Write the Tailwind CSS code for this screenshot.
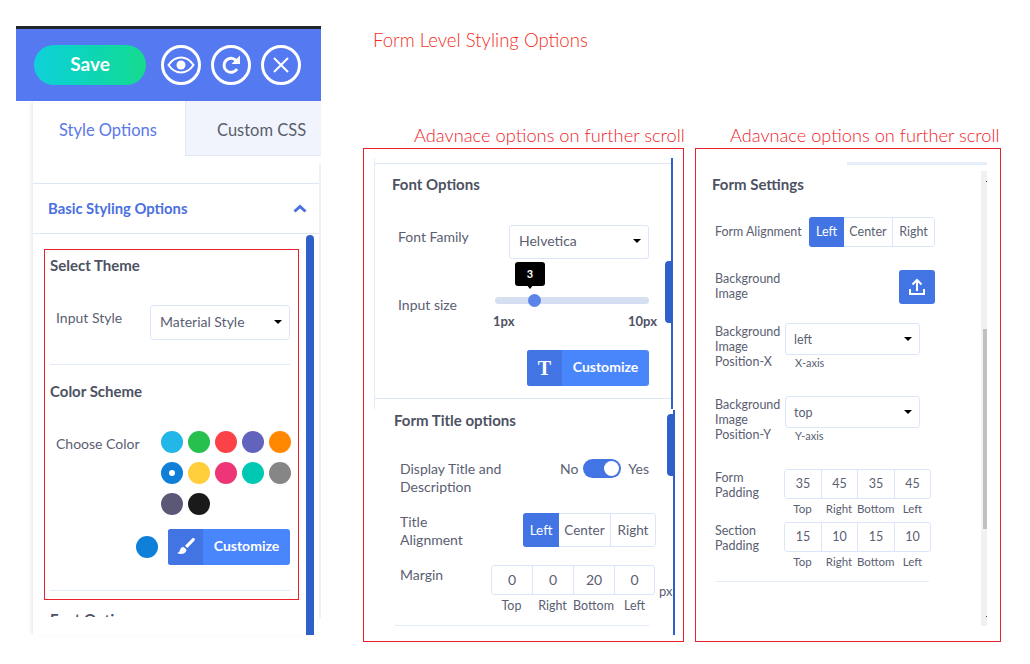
<!DOCTYPE html>
<html lang="en">
<head>
    <meta charset="UTF-8">
    <meta name="viewport" content="width=device-width, initial-scale=1.0">
    <title>Form Level Styling Options</title>
    <script src="https://cdn.jsdelivr.net/npm/@tailwindcss/browser@4"></script>
</head>
<body class="bg-white">
<div class="relative w-[1030px] h-[664px] overflow-hidden bg-white font-['Lato',sans-serif] text-[14px] text-[#5a6072]">

    <!-- left panel: builder sidebar -->
    <div class="absolute left-[16px] top-[26px] w-[305px] h-[609px]">
        <div class="h-[75px] border-t-[3px] border-[#22262b] bg-[#5479f0] flex items-center pl-[18px]">
            <button class="w-[112px] h-[40px] pb-[2px] rounded-[20px] bg-gradient-to-r from-[#10d0da] to-[#16da8e] text-white font-bold text-[19px]">Save</button>
            <div class="ml-[15px] flex gap-[10px]">
                <div class="w-[40px] h-[40px] rounded-full border-[3px] border-white flex items-center justify-center">
                    <svg width="28" height="18" viewBox="0 0 28 18" fill="none" stroke="white" stroke-width="2"><path d="M1.5 9C5 3.8 9.2 1.5 14 1.5S23 3.8 26.500 9C23 14.200 18.800 16.500 14 16.500S5 14.200 1.500 9Z"/><circle cx="14" cy="9" r="4.500" fill="white" stroke="none"/></svg>
                </div>
                <div class="w-[40px] h-[40px] rounded-full border-[3px] border-white flex items-center justify-center">
                    <svg width="22" height="22" viewBox="0 0 22 22" fill="none"><path d="M16.500 7A7 7 0 1 0 17 15" stroke="white" stroke-width="3"/><path d="M20 1.500V10H11.500Z" fill="white"/></svg>
                </div>
                <div class="w-[40px] h-[40px] rounded-full border-[3px] border-white flex items-center justify-center">
                    <svg width="18" height="18" viewBox="0 0 18 18" stroke="white" stroke-width="2"><path d="M2 2L16 16M16 2L2 16"/></svg>
                </div>
            </div>
        </div>

        <div class="relative ml-[17px] h-[534px] shadow-[-3px_0_3px_-1px_rgba(0,0,0,0.08)]">
            <div class="flex h-[55px] text-[16.500px]">
                <div class="w-[153px] bg-white border-r border-[#dfe8f7] text-[#5b78e6] pl-[26px] pt-[17px]">Style Options</div>
                <div class="flex-1 bg-[#f1f4fd] border-b border-[#dfe8f7] pl-[31px] pt-[17px] text-[#5a5f6e]">Custom CSS</div>
            </div>
            <div class="w-[287px] h-[479px]">
                <div class="h-[27px]"></div>
                <div class="h-[51px] border-y border-[#dfe6f5] flex items-center justify-between pl-[15px] pr-[13px]">
                    <span class="font-bold text-[14.800px] text-[#4a6fe0]">Basic Styling Options</span>
                    <svg width="14" height="9" viewBox="0 0 14 9" fill="none" stroke="#4a6fe0" stroke-width="3"><path d="M1.500 7.500L7 2.500L12.500 7.500"/></svg>
                </div>
                <div class="ml-[11px] mt-[15px] w-[255px] h-[351px] border border-[#e8202a] pl-[5px] pr-[8px] pt-[5px]">
                    <h3 class="font-bold text-[15px] text-[#4d5263] leading-[20px]">Select Theme</h3>
                    <div class="flex justify-between mt-[30px] h-[35px]">
                        <span class="ml-[6px] mt-[2px]">Input Style</span>
                        <div class="w-[140px] h-[35px] pb-[2px] rounded-[3px] border border-[#dbe6fb] flex items-center justify-between pl-[9px] pr-[7px]">
                            <span>Material Style</span><span class="w-0 h-0 border-x-[4px] border-t-[4px] border-x-transparent border-t-black"></span>
                        </div>
                    </div>
                    <div class="mt-[24px] border-t border-[#e3eaf8]"></div>
                    <h3 class="mt-[16px] font-bold text-[15px] text-[#4d5263] leading-[20px]">Color Scheme</h3>
                    <div class="flex mt-[31px]">
                        <span class="ml-[6px] mt-[1px] w-[105px] shrink-0">Choose Color</span>
                        <div class="grid grid-cols-[repeat(5,22px)] gap-x-[5px] gap-y-[9px] -mt-[1px]">
                            <span class="h-[22px] rounded-full bg-[#23b7e8]"></span>
                            <span class="h-[22px] rounded-full bg-[#27c04f]"></span>
                            <span class="h-[22px] rounded-full bg-[#fb4347]"></span>
                            <span class="h-[22px] rounded-full bg-[#6263bd]"></span>
                            <span class="h-[22px] rounded-full bg-[#ff8800]"></span>
                            <span class="h-[22px] rounded-full bg-[#0f7fd8] flex items-center justify-center"><span class="w-[6px] h-[6px] rounded-full bg-white"></span></span>
                            <span class="h-[22px] rounded-full bg-[#ffce3a]"></span>
                            <span class="h-[22px] rounded-full bg-[#ee3577]"></span>
                            <span class="h-[22px] rounded-full bg-[#00c9b3]"></span>
                            <span class="h-[22px] rounded-full bg-[#868686]"></span>
                            <span class="h-[22px] rounded-full bg-[#5b5876]"></span>
                            <span class="h-[22px] rounded-full bg-[#1a1a1a]"></span>
                        </div>
                    </div>
                    <div class="flex justify-end items-center gap-[10px] mt-[14px]">
                        <span class="w-[22px] h-[22px] rounded-full bg-[#0f7fd8]"></span>
                        <div class="w-[122px] h-[36px] rounded-[3px] overflow-hidden flex bg-[#4a86fb] text-white font-bold">
                            <span class="w-[35px] bg-[#4274e4] flex items-center justify-center">
                                <svg width="20" height="20" viewBox="0 0 20 20" fill="white"><path d="M18.500 1.500c-.8-.7-1.900-.4-2.800.5L9 8.800l2.300 2.300 6.600-6.900c.9-1 1.300-2 .6-2.700Z"/><path d="M7.700 10c-2.400.2-3.400 1.700-3.800 3.300-.3 1.300-.9 2.300-2.900 2.700 2.800 1.700 7.500 1.500 9-1.400.5-1 .4-1.800.2-2.300Z"/></svg>
                            </span>
                            <span class="flex-1 pb-[3px] flex items-center justify-center">Customize</span>
                        </div>
                    </div>
                    <div class="mt-[25px] border-t border-[#e3eaf8]"></div>
                </div>
                <div class="ml-[17px] mt-[9px] h-[8px] overflow-hidden font-bold text-[15px] text-[#4d5263] leading-[20px]">Font Options</div>
            </div>
            <div class="absolute left-[273px] top-[134px] w-[8px] h-[400px] rounded-t-[4px] bg-[#2f60c8]"></div>
            <div class="absolute left-[286px] top-[62px] w-[2px] h-[455px] bg-[#f0f1f4]"></div>
        </div>
    </div>

    <!-- annotation headings -->
    <p class="absolute left-[373px] top-[27px] text-[18.600px] font-light text-[#f22e22] leading-[26px]">Form Level Styling Options</p>
    <p class="absolute left-[414px] top-[122px] text-[18.300px] font-light text-[#f01c2c] leading-[26px]">Adavnace options on further scroll</p>
    <p class="absolute left-[730px] top-[122px] text-[18.200px] font-light text-[#f01c2c] leading-[26px]">Adavnace options on further scroll</p>

    <!-- middle frame -->
    <div class="absolute left-[363px] top-[148px] w-[321px] h-[494px] border border-[#e8202a]">
        <div class="relative ml-[10px] mt-[9px] w-[299px] h-[478px]">
            <div class="absolute right-0 top-0 w-[2px] h-[251px] bg-[#2f60c8]"></div>
            <div class="absolute -right-[2px] top-[252px] w-[2px] h-[225px] bg-[#2f60c8]"></div>
            <div class="absolute right-[1px] top-[103px] w-[7px] h-[62px] rounded-l-[4px] bg-[#2f60c8]"></div>
            <div class="absolute -right-[2px] top-[256px] w-[8px] h-[62px] rounded-l-[4px] bg-[#2f60c8]"></div>

            <section class="h-[251px] border-l border-[#e3eaf8] pt-[5px]">
                <div class="h-[236px] border-y border-[#dfe6f5] pr-[24px]">
                    <h3 class="ml-[17px] mt-[10px] font-bold text-[15px] text-[#4d5263] leading-[20px]">Font Options</h3>
                    <div class="flex justify-between mt-[31px] pl-[23px]">
                        <span class="mt-[1px]">Font Family</span>
                        <div class="w-[140px] h-[34px] pb-[3px] rounded-[3px] border border-[#dbe6fb] flex items-center justify-between pl-[9px] pr-[7px]">
                            <span>Helvetica</span><span class="w-0 h-0 border-x-[4px] border-t-[4px] border-x-transparent border-t-black"></span>
                        </div>
                    </div>
                    <div class="flex mt-[3px] pl-[23px]">
                        <span class="mt-[32px] w-[97px] shrink-0">Input size</span>
                        <div class="relative w-[154px] h-[78px]">
                            <div class="absolute left-[20px] top-0 w-[30px] h-[24px] rounded-[3px] bg-black text-white text-[11px] font-bold flex items-center justify-center">3</div>
                            <div class="absolute left-[31px] top-[22px] w-0 h-0 border-x-[4px] border-t-[5px] border-x-transparent border-t-black"></div>
                            <div class="absolute left-0 top-[35px] w-full h-[7px] rounded-full bg-[#d5dff2]"></div>
                            <div class="absolute left-[33px] top-[32px] w-[13px] h-[13px] rounded-full bg-[#5a84e8]"></div>
                            <div class="absolute -left-[2px] right-[-8px] top-[50px] flex justify-between text-[13px] font-bold text-[#4d5263]"><span>1px</span><span>10px</span></div>
                        </div>
                    </div>
                    <div class="flex justify-end mt-[10px]">
                        <div class="w-[122px] h-[36px] rounded-[3px] overflow-hidden flex bg-[#4a86fb] text-white font-bold">
                            <span class="w-[35px] bg-[#4274e4] flex items-center justify-center font-['Liberation_Serif',serif] text-[20px]">T</span>
                            <span class="flex-1 pb-[3px] flex items-center justify-center">Customize</span>
                        </div>
                    </div>
                </div>
            </section>

            <section class="pl-[20px] pr-[24px] pt-[1px]">
                <h3 class="font-bold text-[15px] text-[#4d5263] leading-[20px]">Form Title options</h3>
                <div class="flex justify-between mt-[30px] pl-[6px] leading-[18px]">
                    <span>Display Title and<br>Description</span>
                    <div class="flex items-start gap-[5px] -mt-[1px]">
                        <span class="leading-[20px]">No</span>
                        <span class="w-[38px] h-[19px] rounded-full bg-[#4274e4] flex items-center justify-end pr-[2px]"><span class="w-[15px] h-[15px] rounded-full bg-white"></span></span>
                        <span class="ml-[2px] leading-[20px]">Yes</span>
                    </div>
                </div>
                <div class="flex justify-between mt-[17px] pl-[6px] leading-[18px] -mr-[7px]">
                    <span>Title<br>Alignment</span>
                    <div class="flex w-[133px] h-[34px] rounded-[3px] border border-[#dbe6fb] text-[13.500px] text-center leading-[32px]">
                        <span class="w-[36px] -my-px -ml-px bg-[#4274e4] text-white rounded-l-[3px] leading-[34px]">Left</span>
                        <span class="w-[52px] border-r border-[#dbe6fb]">Center</span>
                        <span class="flex-1">Right</span>
                    </div>
                </div>
                <div class="flex justify-between mt-[16px] pl-[6px] -mr-[6px]">
                    <span class="-mt-[1px]">Margin</span>
                    <div class="w-[164px]">
                        <div class="flex h-[30px] rounded-[3px] border border-[#dbe6fb] text-center leading-[28px]">
                            <span class="w-[41px] border-r border-[#dbe6fb]">0</span>
                            <span class="w-[41px] border-r border-[#dbe6fb]">0</span>
                            <span class="w-[41px] border-r border-[#dbe6fb]">20</span>
                            <span class="flex-1">0</span>
                        </div>
                        <div class="flex text-[12.500px] text-center mt-[2px]">
                            <span class="w-[41px]">Top</span><span class="w-[41px]">Right</span><span class="w-[41px]">Bottom</span><span class="flex-1">Left</span>
                        </div>
                    </div>
                </div>
                <div class="ml-px mt-[9px] border-t border-[#e3eaf8]"></div>
            </section>
            <span class="absolute left-[285px] top-[424px] text-[13px]">px</span>
        </div>
    </div>

    <!-- right frame -->
    <div class="absolute left-[695px] top-[148px] w-[306px] h-[494px] border border-[#e8202a]">
        <div class="ml-[151px] mt-[13px] w-[140px] h-[3px] bg-[#e3eef9]"></div>
        <div class="absolute left-[285px] top-[22px] w-[6px] h-[455px] bg-[#f1f1f1]">
            <div class="absolute right-0 top-[158px] w-[4px] h-[200px] bg-[#c1c1c1]"></div>
            <div class="absolute right-0 top-[10px] w-px h-px bg-[#444]"></div>
            <div class="absolute right-0 top-[445px] w-px h-px bg-[#444]"></div>
        </div>
        <div class="pl-[16px] pr-[65px] text-[12.500px]">
            <h3 class="mt-[9px] text-[15px] font-bold text-[#4d5263] leading-[20px]">Form Settings</h3>
            <div class="flex mt-[23px] pl-[3px]">
                <span class="w-[94px] mt-[6px] shrink-0 text-[12.400px]">Form Alignment</span>
                <div class="flex w-[126px] h-[30px] rounded-[3px] border border-[#dbe6fb] text-center leading-[28px]">
                    <span class="w-[35px] -my-px -ml-px bg-[#4274e4] text-white rounded-l-[3px] leading-[30px]">Left</span>
                    <span class="w-[49px] border-r border-[#dbe6fb]">Center</span>
                    <span class="flex-1">Right</span>
                </div>
            </div>
            <div class="flex justify-between mt-[23px] pl-[3px] leading-[15px]">
                <span class="mt-[1px]">Background<br>Image</span>
                <div class="w-[36px] h-[34px] rounded-[3px] bg-[#4274e4] flex items-center justify-center">
                    <svg width="16" height="18" viewBox="0 0 16 18" fill="none" stroke="white" stroke-width="2"><path d="M8 13V2M3.500 6.500L8 2L12.500 6.500M1 11V16H15V11"/></svg>
                </div>
            </div>
            <div class="flex mt-[19px] pl-[3px] leading-[15px]">
                <span class="w-[70px] mt-[1px] shrink-0">Background<br>Image<br>Position-X</span>
                <div class="w-[135px]">
                    <div class="h-[32px] rounded-[3px] border border-[#dbe6fb] flex items-center justify-between pl-[8px] pr-[7px]">
                        <span>left</span><span class="w-0 h-0 border-x-[4px] border-t-[4px] border-x-transparent border-t-black"></span>
                    </div>
                    <p class="pl-[10px] text-[11px]">X-axis</p>
                </div>
            </div>
            <div class="flex mt-[26px] pl-[3px] leading-[15px]">
                <span class="w-[70px] mt-[1px] shrink-0">Background<br>Image<br>Position-Y</span>
                <div class="w-[135px]">
                    <div class="h-[32px] rounded-[3px] border border-[#dbe6fb] flex items-center justify-between pl-[8px] pr-[7px]">
                        <span>top</span><span class="w-0 h-0 border-x-[4px] border-t-[4px] border-x-transparent border-t-black"></span>
                    </div>
                    <p class="pl-[10px] text-[11px]">Y-axis</p>
                </div>
            </div>
            <div class="flex mt-[26px] pl-[3px] leading-[15px]">
                <span class="w-[69px] mt-[1px] shrink-0">Form<br>Padding</span>
                <div class="w-[147px]">
                    <div class="flex h-[30px] rounded-[3px] border border-[#dbe6fb] text-center leading-[28px]">
                        <span class="w-[37px] border-r border-[#dbe6fb]">35</span><span class="w-[36px] border-r border-[#dbe6fb]">45</span><span class="w-[37px] border-r border-[#dbe6fb]">35</span><span class="flex-1">45</span>
                    </div>
                    <div class="flex text-[11.500px] text-center mt-[2px]">
                        <span class="w-[37px]">Top</span><span class="w-[36px]">Right</span><span class="w-[37px]">Bottom</span><span class="flex-1">Left</span>
                    </div>
                </div>
            </div>
            <div class="flex mt-[6px] pl-[3px] leading-[15px]">
                <span class="w-[69px] mt-[1px] shrink-0">Section<br>Padding</span>
                <div class="w-[147px]">
                    <div class="flex h-[30px] rounded-[3px] border border-[#dbe6fb] text-center leading-[28px]">
                        <span class="w-[37px] border-r border-[#dbe6fb]">15</span><span class="w-[36px] border-r border-[#dbe6fb]">10</span><span class="w-[37px] border-r border-[#dbe6fb]">15</span><span class="flex-1">10</span>
                    </div>
                    <div class="flex text-[11.500px] text-center mt-[2px]">
                        <span class="w-[37px]">Top</span><span class="w-[36px]">Right</span><span class="w-[37px]">Bottom</span><span class="flex-1">Left</span>
                    </div>
                </div>
            </div>
            <div class="ml-[4px] mt-[12px] w-[213px] border-t border-[#e3eaf8]"></div>
        </div>
    </div>
</div>
</body>
</html>
